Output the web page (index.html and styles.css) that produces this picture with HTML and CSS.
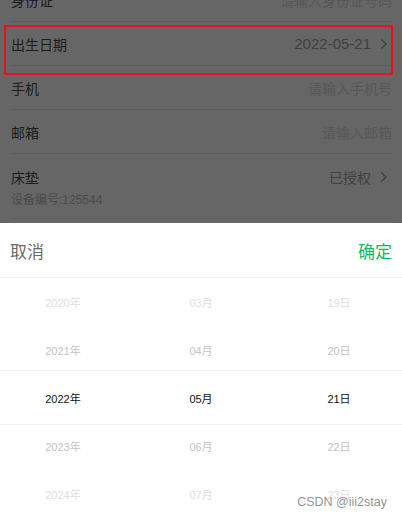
FILE: index.html
```html
<!DOCTYPE html>
<html lang="zh-CN">
<head>
<meta charset="utf-8">
<title>出生日期</title>
<link rel="stylesheet" href="styles.css">
</head>
<body>
<div class="screen">
  <div class="dim">
    <div class="list">
      <div class="row">
        <span class="label">身份证</span>
        <span class="ph">请输入身份证号码</span>
      </div>
      <div class="row">
        <span class="label">出生日期</span>
        <span class="value date">2022-05-21</span>
        <svg class="chev" width="10" height="12" viewBox="0 0 10 12"><path d="M2.5 1.5 L7 6 L2.5 10.5" fill="none" stroke="#3f3f3f" stroke-width="1.3"/></svg>
      </div>
      <div class="row">
        <span class="label">手机</span>
        <span class="ph">请输入手机号</span>
      </div>
      <div class="row">
        <span class="label">邮箱</span>
        <span class="ph">请输入邮箱</span>
      </div>
      <div class="row tall">
        <div class="line">
          <span class="label">床垫</span>
          <span class="value">已授权</span>
          <svg class="chev" width="10" height="12" viewBox="0 0 10 12"><path d="M2.5 1.5 L7 6 L2.5 10.5" fill="none" stroke="#3f3f3f" stroke-width="1.3"/></svg>
        </div>
        <div class="sub">设备编号:125544</div>
      </div>
    </div>
    <div class="mark"></div>
  </div>
  <div class="sheet">
    <div class="head">
      <span class="cancel">取消</span>
      <span class="ok">确定</span>
    </div>
    <div class="picker">
      <div class="col">
        <div class="item f2">2020年</div>
        <div class="item f1">2021年</div>
        <div class="item sel">2022年</div>
        <div class="item f1">2023年</div>
        <div class="item f2">2024年</div>
      </div>
      <div class="col">
        <div class="item f2">03月</div>
        <div class="item f1">04月</div>
        <div class="item sel">05月</div>
        <div class="item f1">06月</div>
        <div class="item f2">07月</div>
      </div>
      <div class="col">
        <div class="item f2">19日</div>
        <div class="item f1">20日</div>
        <div class="item sel">21日</div>
        <div class="item f1">22日</div>
        <div class="item f2">23日</div>
      </div>
      <div class="band"></div>
    </div>
    <div class="wm">CSDN @iii2stay</div>
  </div>
</div>
</body>
</html>
```
FILE: styles.css
```css
html, body {
  margin: 0;
  padding: 0;
  background: #fff;
}
body {
  font-family: "Liberation Sans", "Noto Sans CJK SC", sans-serif;
  width: 402px;
  height: 516px;
  overflow: hidden;
}
.screen {
  display: flex;
  flex-direction: column;
  height: 516px;
}
.dim {
  position: relative;
  height: 223px;
  background: #666;
  overflow: hidden;
  flex: none;
}
.list {
  margin-top: -22px;
}
.row {
  display: flex;
  align-items: center;
  height: 43px;
  margin: 0 10px;
  padding: 0 0 0 1px;
  border-bottom: 1px solid #5d5d5d;
}
.row.tall {
  height: auto;
  display: block;
  padding: 13px 0 9px 1px;
}
.line {
  display: flex;
  align-items: center;
  height: 20px;
}
.label {
  flex: 1;
  font-size: 14px;
  color: #1c1c1c;
}
.ph {
  font-size: 14px;
  color: #575757;
}
.value {
  font-size: 14px;
  color: #404040;
}
.value.date {
  font-size: 15px;
}
.chev {
  margin-left: 8px;
  margin-right: 3px;
  flex: none;
}
.sub {
  margin-top: 4px;
  line-height: 18px;
  font-size: 12px;
  color: #4a4a4a;
}
.mark {
  position: absolute;
  left: 4px;
  top: 25px;
  width: 385px;
  height: 46px;
  border: 2px solid #e8121c;
}
.sheet {
  position: relative;
  flex: 1;
  background: #fff;
}
.head {
  display: flex;
  align-items: center;
  justify-content: space-between;
  height: 54px;
  padding: 0 10px;
  border-bottom: 1px solid #f1f1f1;
}
.cancel {
  font-size: 17px;
  color: #6a6a6a;
}
.ok {
  font-size: 17px;
  color: #09bb67;
}
.picker {
  position: relative;
  display: grid;
  grid-template-columns: 126px 150px 1fr;
}
.col {
  display: flex;
  flex-direction: column;
}
.item {
  height: 48px;
  display: flex;
  align-items: center;
  justify-content: center;
  font-size: 11px;
}
.item.sel {
  color: #111;
}
.item.f1 {
  color: #c4c4c4;
}
.item.f2 {
  color: #e0e0e0;
}
.band {
  position: absolute;
  left: 0;
  right: 0;
  top: 92px;
  height: 53px;
  border-top: 1px solid #f0f0f0;
  border-bottom: 1px solid #f0f0f0;
  pointer-events: none;
}
.wm {
  position: absolute;
  right: 15px;
  bottom: 9px;
  font-size: 12.5px;
  color: rgba(140, 140, 140, 0.95);
}
```
